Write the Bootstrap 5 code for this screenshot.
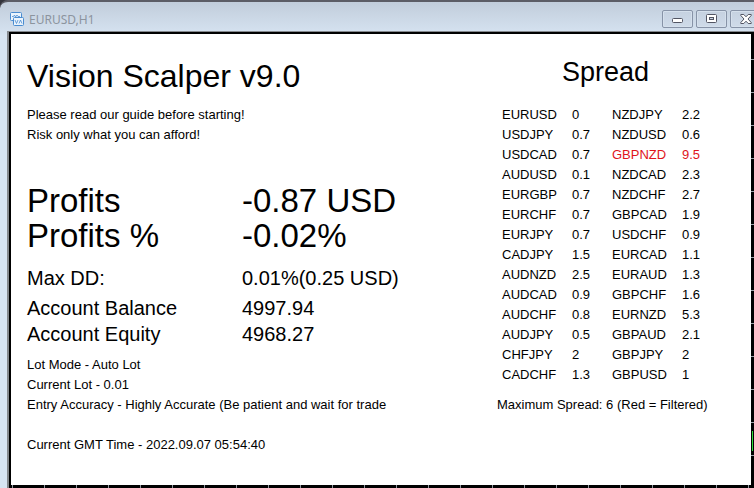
<!DOCTYPE html>
<html lang="en">
<head>
<meta charset="utf-8">
<meta name="viewport" content="width=device-width, initial-scale=1">
<title>EURUSD,H1</title>
<link rel="stylesheet" href="https://cdn.jsdelivr.net/npm/bootstrap@5.3.0/dist/css/bootstrap.min.css">
<style>
body { font-family: "Liberation Sans", Arial, sans-serif; font-size: 13px; line-height: 20px; color: #000; background: #d7e4f2; }
.win { border-top: 2px solid #5c5d66; border-top-left-radius: 8px; background: linear-gradient(#c1cddb, #d7e4f2 34px); }
.corner { background: #33343c; }
.titlebar { height: 29px; padding: 6px 0 0 10px; }
.caption { font: 12px/20px "Noto Sans", "Open Sans", sans-serif; color: #8c949e; margin-left: 5px; padding-top: 2px; }
.winbtns { gap: 3px; margin-right: -7px; padding-top: 2px; }
.winbtn { width: 31px; height: 18px; border: 1px solid #8793a7; border-radius: 2px; background: linear-gradient(#c5d1e0, #cfdbe9); box-shadow: inset 0 0 0 1px #d5e0ec; }
.chart { margin-left: 7px; border-left: 2px solid #85898e; border-top: 1px solid #85898e; background: #000; padding: 2px 3px 3px 2px; position: relative; }
.grid-x { left: 3px; right: 0; bottom: 0; height: 3px; background: linear-gradient(90deg, #8f969e 1px, transparent 1px) 0 0 / 32px 3px; }
.grid-y { right: 0; top: 27px; bottom: 0; width: 3px; background: linear-gradient(#9aa1a8 1px, transparent 1px) 0 0 / 3px 33px; }
.candle { right: 1px; bottom: 37px; width: 1px; height: 20px; background: #2fdc3c; }
.panel { background: #fff; padding: 0 0 30px 16px; }
.info { padding-top: 22px; }
.spread { width: 254px; padding-top: 18px; }
h1 { font-size: 32px; line-height: 40px; margin: 0 0 9px; font-weight: 400; }
h2 { font-size: 27px; line-height: 40px; margin: 0 0 13px 65px; font-weight: 400; }
th { font-weight: 400; }
td, th { padding: 0; text-align: left; white-space: nowrap; }
.stats { margin-top: 38px; margin-bottom: 8px; }
.stats th { width: 215px; }
.big { font-size: 33px; line-height: 35px; }
.mid { font-size: 20px; line-height: 26px; }
.dd > * { padding-top: 12px; padding-bottom: 4px; }
.pairs { margin-left: 5px; margin-bottom: 10px; }
.pairs th { width: 70px; }
.pairs td { width: 40px; }
.filtered { color: #e0141c; }
.gmt { margin-top: 20px; }
</style>
<script src="https://cdn.jsdelivr.net/npm/bootstrap@5.3.0/dist/js/bootstrap.bundle.min.js"></script>
</head>
<body class="overflow-hidden">
<div class="corner">
<div class="win overflow-hidden">
  <header class="titlebar d-flex align-items-start">
    <svg width="14" height="14" viewBox="0 0 14 14" fill="#eaf4fd" stroke="#4a8cd0" class="mt-1 flex-shrink-0" aria-hidden="true">
      <rect x=".5" y=".5" width="11" height="8" rx="1"/><path d="M2 4.500h1.500l1-1.500 1 2 1.500-2 1 1.500h2" fill="none" stroke-width=".8"/>
      <rect x="3.500" y="5.500" width="10" height="8" rx="1"/><path d="M5 8l1.500 3.500L8 8M9 11.500L10.500 8l1.500 3.500" fill="none" stroke-width=".8"/>
    </svg>
    <span class="caption">EURUSD,H1</span>
    <div class="winbtns d-flex ms-auto">
      <button class="winbtn p-0 d-flex align-items-center justify-content-center" type="button" aria-label="Minimize"><svg width="12" height="12" viewBox="0 0 12 12"><rect x=".5" y="5.500" width="10" height="4" rx="1" fill="#fff" stroke="#525563"/></svg></button>
      <button class="winbtn p-0 d-flex align-items-center justify-content-center" type="button" aria-label="Maximize"><svg width="12" height="12" viewBox="0 0 12 12" stroke="#525563"><rect x=".5" y="1.500" width="10" height="8" rx="1" fill="#fff"/><rect x="3.500" y="4.500" width="4" height="2" fill="#c7d2e1"/></svg></button>
      <button class="winbtn p-0 d-flex align-items-center justify-content-center" type="button" aria-label="Close"><svg width="12" height="12" viewBox="0 0 12 12"><path d="M.8 1.500h3L6 3.800l2.200-2.300h3v1L8 6l3.200 3.500v1h-3L6 8.200l-2.200 2.300h-3v-1L4 6 .8 2.500z" fill="#fff" stroke="#525563"/></svg></button>
    </div>
  </header>
  <main class="chart">
    <div class="grid-x position-absolute"></div>
    <div class="grid-y position-absolute"></div>
    <div class="candle position-absolute"></div>
    <div class="panel d-flex">
      <section class="info flex-grow-1">
        <h1>Vision Scalper v9.0</h1>
        <div>Please read our guide before starting!</div>
        <div>Risk only what you can afford!</div>
        <table class="stats">
          <tr class="big"><th scope="row">Profits</th><td>-0.87 USD</td></tr>
          <tr class="big"><th scope="row">Profits %</th><td>-0.02%</td></tr>
          <tr class="mid dd"><th scope="row">Max DD:</th><td>0.01%(0.25 USD)</td></tr>
          <tr class="mid"><th scope="row">Account Balance</th><td>4997.94</td></tr>
          <tr class="mid"><th scope="row">Account Equity</th><td>4968.27</td></tr>
        </table>
        <div>Lot Mode - Auto Lot</div>
        <div>Current Lot - 0.01</div>
        <div>Entry Accuracy - Highly Accurate (Be patient and wait for trade</div>
        <div class="gmt">Current GMT Time - 2022.09.07 05:54:40</div>
      </section>
      <section class="spread flex-shrink-0">
        <h2>Spread</h2>
        <table class="pairs">
          <tr><th>EURUSD</th><td>0</td><th>NZDJPY</th><td>2.2</td></tr>
          <tr><th>USDJPY</th><td>0.7</td><th>NZDUSD</th><td>0.6</td></tr>
          <tr><th>USDCAD</th><td>0.7</td><th class="filtered">GBPNZD</th><td class="filtered">9.5</td></tr>
          <tr><th>AUDUSD</th><td>0.1</td><th>NZDCAD</th><td>2.3</td></tr>
          <tr><th>EURGBP</th><td>0.7</td><th>NZDCHF</th><td>2.7</td></tr>
          <tr><th>EURCHF</th><td>0.7</td><th>GBPCAD</th><td>1.9</td></tr>
          <tr><th>EURJPY</th><td>0.7</td><th>USDCHF</th><td>0.9</td></tr>
          <tr><th>CADJPY</th><td>1.5</td><th>EURCAD</th><td>1.1</td></tr>
          <tr><th>AUDNZD</th><td>2.5</td><th>EURAUD</th><td>1.3</td></tr>
          <tr><th>AUDCAD</th><td>0.9</td><th>GBPCHF</th><td>1.6</td></tr>
          <tr><th>AUDCHF</th><td>0.8</td><th>EURNZD</th><td>5.3</td></tr>
          <tr><th>AUDJPY</th><td>0.5</td><th>GBPAUD</th><td>2.1</td></tr>
          <tr><th>CHFJPY</th><td>2</td><th>GBPJPY</th><td>2</td></tr>
          <tr><th>CADCHF</th><td>1.3</td><th>GBPUSD</th><td>1</td></tr>
        </table>
        <div>Maximum Spread: 6 (Red = Filtered)</div>
      </section>
    </div>
  </main>
</div>
</div>
</body>
</html>
